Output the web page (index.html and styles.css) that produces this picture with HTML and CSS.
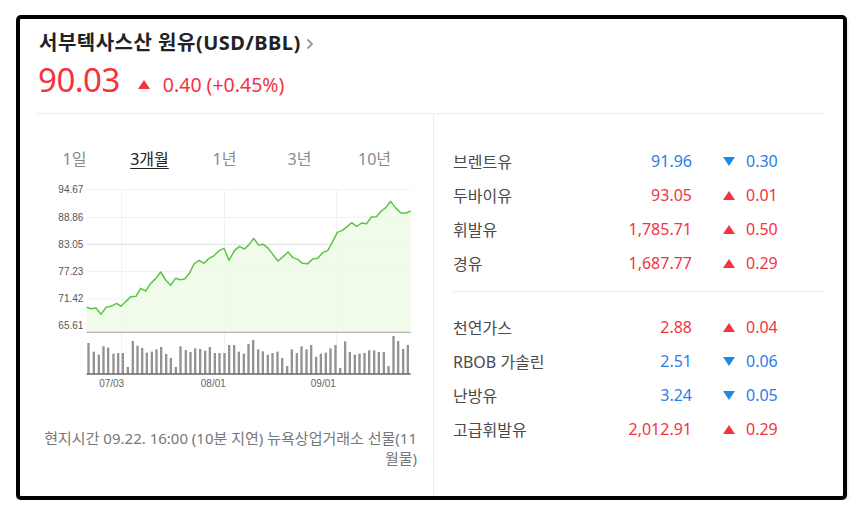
FILE: index.html
```html
<!DOCTYPE html>
<html lang="ko">
<head>
<meta charset="utf-8">
<title>서부텍사스산 원유</title>
<link rel="stylesheet" href="styles.css">
</head>
<body>
<div class="card">
  <div class="head">
    <h1 class="title">서부텍사스산 원유(USD/BBL)<svg class="chev" width="8" height="12" viewBox="0 0 8 12"><path d="M1.5 1.5 L6 6 L1.5 10.5" fill="none" stroke="#9a9a9a" stroke-width="1.8"/></svg></h1>
    <div class="price"><span class="now">90.03</span><span class="tri up"></span><span class="diff">0.40 (+0.45%)</span></div>
  </div>
  <div class="body">
    <div class="left">
      <ul class="tabs">
        <li>1일</li>
        <li class="on">3개월</li>
        <li>1년</li>
        <li>3년</li>
        <li>10년</li>
      </ul>
      <svg class="chart" width="390" height="210" viewBox="0 0 1170 630">
        <g stroke="#f0f0f0" stroke-width="3">
          <line x1="245" y1="28" x2="245" y2="582"/>
          <line x1="553" y1="28" x2="553" y2="582"/>
          <line x1="890" y1="28" x2="890" y2="582"/>
          <line x1="140" y1="28" x2="1112" y2="28"/>
          <line x1="140" y1="112" x2="1112" y2="112"/>
          <line x1="140" y1="274" x2="1112" y2="274"/>
          <line x1="140" y1="357" x2="1112" y2="357"/>
          <line x1="140" y1="438" x2="1112" y2="438"/>
        </g>
        <line x1="140" y1="193" x2="1112" y2="193" stroke="#dde1e6" stroke-width="3"/>
        <path d="M140,382 L152,386 L168,384 L183,403 L198,382 L213,379 L230,370 L243,379 L258,364 L273,350 L288,349 L302,325 L317,333 L332,310 L347,296 L362,276 L377,300 L392,316 L406,295 L421,299 L434,297 L448,280 L462,252 L477,241 L492,250 L507,235 L521,228 L537,212 L552,205 L567,241 L583,212 L598,199 L613,207 L628,193 L641,175 L656,195 L670,193 L685,205 L699,224 L714,243 L729,230 L744,216 L759,233 L773,238 L788,250 L803,251 L818,237 L833,235 L848,218 L863,212 L878,185 L892,157 L907,151 L922,139 L935,128 L950,139 L965,129 L980,131 L994,111 L1009,110 L1024,93 L1037,83 L1052,64 L1068,85 L1083,99 L1098,99 L1112,93 L1112,457 L140,457 Z" fill="#eefbe8" fill-opacity="0.9"/>
        <path d="M140,382 L152,386 L168,384 L183,403 L198,382 L213,379 L230,370 L243,379 L258,364 L273,350 L288,349 L302,325 L317,333 L332,310 L347,296 L362,276 L377,300 L392,316 L406,295 L421,299 L434,297 L448,280 L462,252 L477,241 L492,250 L507,235 L521,228 L537,212 L552,205 L567,241 L583,212 L598,199 L613,207 L628,193 L641,175 L656,195 L670,193 L685,205 L699,224 L714,243 L729,230 L744,216 L759,233 L773,238 L788,250 L803,251 L818,237 L833,235 L848,218 L863,212 L878,185 L892,157 L907,151 L922,139 L935,128 L950,139 L965,129 L980,131 L994,111 L1009,110 L1024,93 L1037,83 L1052,64 L1068,85 L1083,99 L1098,99 L1112,93" fill="none" stroke="#5cc447" stroke-width="4.5" stroke-linejoin="round"/>
        <line x1="140" y1="457" x2="1112" y2="457" stroke="#b5b5b5" stroke-width="4"/>
        <g fill="#939393">
          <rect x="142" y="489" width="7" height="93"/>
          <rect x="158" y="515" width="7" height="67"/>
          <rect x="173" y="524" width="7" height="58"/>
          <rect x="187" y="499" width="7" height="83"/>
          <rect x="201" y="503" width="7" height="79"/>
          <rect x="217" y="521" width="7" height="61"/>
          <rect x="231" y="519" width="7" height="63"/>
          <rect x="245" y="519" width="7" height="63"/>
          <rect x="260" y="561" width="7" height="21"/>
          <rect x="275" y="483" width="7" height="99"/>
          <rect x="289" y="497" width="7" height="85"/>
          <rect x="303" y="504" width="7" height="78"/>
          <rect x="317" y="518" width="7" height="64"/>
          <rect x="332" y="515" width="7" height="67"/>
          <rect x="346" y="508" width="7" height="74"/>
          <rect x="360" y="501" width="7" height="81"/>
          <rect x="375" y="522" width="7" height="60"/>
          <rect x="389" y="534" width="7" height="48"/>
          <rect x="404" y="561" width="7" height="21"/>
          <rect x="418" y="499" width="7" height="83"/>
          <rect x="434" y="510" width="7" height="72"/>
          <rect x="448" y="516" width="7" height="66"/>
          <rect x="462" y="505" width="7" height="77"/>
          <rect x="477" y="507" width="7" height="75"/>
          <rect x="492" y="512" width="7" height="70"/>
          <rect x="506" y="501" width="7" height="81"/>
          <rect x="521" y="519" width="7" height="63"/>
          <rect x="535" y="519" width="7" height="63"/>
          <rect x="550" y="519" width="7" height="63"/>
          <rect x="564" y="495" width="7" height="87"/>
          <rect x="579" y="495" width="7" height="87"/>
          <rect x="593" y="515" width="7" height="67"/>
          <rect x="608" y="521" width="7" height="61"/>
          <rect x="622" y="492" width="7" height="90"/>
          <rect x="636" y="480" width="7" height="102"/>
          <rect x="651" y="508" width="7" height="74"/>
          <rect x="665" y="514" width="7" height="68"/>
          <rect x="680" y="524" width="7" height="58"/>
          <rect x="694" y="519" width="7" height="63"/>
          <rect x="709" y="515" width="7" height="67"/>
          <rect x="723" y="534" width="7" height="48"/>
          <rect x="738" y="558" width="7" height="24"/>
          <rect x="752" y="508" width="7" height="74"/>
          <rect x="767" y="519" width="7" height="63"/>
          <rect x="781" y="499" width="7" height="83"/>
          <rect x="796" y="508" width="7" height="74"/>
          <rect x="810" y="495" width="7" height="87"/>
          <rect x="825" y="530" width="7" height="52"/>
          <rect x="839" y="521" width="7" height="61"/>
          <rect x="854" y="518" width="7" height="64"/>
          <rect x="868" y="505" width="7" height="77"/>
          <rect x="883" y="495" width="7" height="87"/>
          <rect x="897" y="564" width="7" height="18"/>
          <rect x="912" y="484" width="7" height="98"/>
          <rect x="926" y="516" width="7" height="66"/>
          <rect x="941" y="524" width="7" height="58"/>
          <rect x="955" y="521" width="7" height="61"/>
          <rect x="970" y="519" width="7" height="63"/>
          <rect x="984" y="511" width="7" height="71"/>
          <rect x="999" y="511" width="7" height="71"/>
          <rect x="1013" y="516" width="7" height="66"/>
          <rect x="1028" y="516" width="7" height="66"/>
          <rect x="1042" y="558" width="7" height="24"/>
          <rect x="1057" y="468" width="7" height="114"/>
          <rect x="1071" y="483" width="7" height="99"/>
          <rect x="1086" y="507" width="7" height="75"/>
          <rect x="1100" y="495" width="7" height="87"/>
        </g>
        <line x1="140" y1="582" x2="1112" y2="582" stroke="#666" stroke-width="4"/>
        <g class="ylab" font-size="30" fill="#555">
          <text x="55" y="38">94.67</text>
          <text x="55" y="122">88.86</text>
          <text x="55" y="203">83.05</text>
          <text x="55" y="284">77.23</text>
          <text x="55" y="367">71.42</text>
          <text x="55" y="448">65.61</text>
        </g>
        <g class="xlab" font-size="30" fill="#666" text-anchor="middle">
          <text x="215" y="622">07/03</text>
          <text x="520" y="622">08/01</text>
          <text x="850" y="622">09/01</text>
        </g>
      </svg>
      <p class="note">현지시간 09.22. 16:00 (10분 지연) 뉴욕상업거래소 선물(11월물)</p>
    </div>
    <div class="right">
      <ul class="list">
        <li><span class="name">브렌트유</span><span class="val down">91.96</span><span class="chg down"><span class="tri dn"></span>0.30</span></li>
        <li><span class="name">두바이유</span><span class="val up">93.05</span><span class="chg up"><span class="tri up"></span>0.01</span></li>
        <li><span class="name">휘발유</span><span class="val up">1,785.71</span><span class="chg up"><span class="tri up"></span>0.50</span></li>
        <li><span class="name">경유</span><span class="val up">1,687.77</span><span class="chg up"><span class="tri up"></span>0.29</span></li>
      </ul>
      <ul class="list second">
        <li><span class="name">천연가스</span><span class="val up">2.88</span><span class="chg up"><span class="tri up"></span>0.04</span></li>
        <li><span class="name">RBOB 가솔린</span><span class="val down">2.51</span><span class="chg down"><span class="tri dn"></span>0.06</span></li>
        <li><span class="name">난방유</span><span class="val down">3.24</span><span class="chg down"><span class="tri dn"></span>0.05</span></li>
        <li><span class="name">고급휘발유</span><span class="val up">2,012.91</span><span class="chg up"><span class="tri up"></span>0.29</span></li>
      </ul>
    </div>
  </div>
</div>
</body>
</html>
```

FILE: styles.css
```css
* { box-sizing: border-box; }

html, body {
  background: #ffffff;
}

body {
  margin: 15px 0 0 16px;
  font-family: "Noto Sans", "Noto Sans CJK KR", sans-serif;
  color: #222;
}

.card {
  width: 831px;
  height: 485px;
  border: 4px solid #000;
  border-radius: 5px;
  background: #fff;
  box-shadow: 0 3px 4px rgba(0, 0, 0, 0.18);
  padding: 0 18px 0 17px;
  display: flex;
  flex-direction: column;
}

.head {
  height: 95px;
  padding: 11px 0 0 2px;
  border-bottom: 1px solid #ebebeb;
}

.title {
  margin: 0;
  font-size: 20px;
  line-height: 26px;
  letter-spacing: 0.5px;
  font-weight: 700;
  color: #222;
  display: flex;
  align-items: center;
}

.chev {
  margin-left: 5px;
  margin-top: 1px;
}

.price {
  margin-top: 4px;
  display: flex;
  align-items: baseline;
  color: #f5333f;
}

.price .now {
  font-size: 33px;
  line-height: 40px;
  letter-spacing: -0.5px;
  margin-left: -1px;
}

.price .tri {
  margin: 0 13px 0 18px;
  position: relative;
  top: -3px;
}

.price .diff {
  font-size: 19.5px;
  line-height: 24px;
}

.tri {
  display: inline-block;
  width: 0;
  height: 0;
  border-left: 6px solid transparent;
  border-right: 6px solid transparent;
}

.tri.up {
  border-bottom: 9px solid #f5333f;
}

.tri.dn {
  border-top: 9px solid #1e8ae8;
}

.body {
  flex: 1;
  display: grid;
  grid-template-columns: 397px 1fr;
}

.left {
  border-right: 1px solid #ebebeb;
}

.tabs {
  list-style: none;
  margin: 0;
  padding: 33px 0 0 0;
  display: flex;
}

.tabs li {
  width: 75px;
  text-align: center;
  font-size: 16px;
  line-height: 24px;
  color: #8a8a8a;
}

.tabs li.on {
  color: #222;
  text-decoration: underline;
  text-underline-offset: 3px;
}

.chart {
  display: block;
  margin: 9px 0 0 3px;
}

.chart text {
  font-family: "Liberation Sans", Arial, sans-serif;
}

.note {
  margin: 38px 0 0 0;
  padding: 0 16px 0 0;
  text-align: right;
  font-size: 15px;
  line-height: 20px;
  letter-spacing: 0;
  color: #777;
}

.right {
  padding: 30px 0 0 19px;
}

.list {
  list-style: none;
  margin: 0;
  padding: 0;
}

.list.second {
  margin-top: 11px;
  padding-top: 18px;
  border-top: 1px solid #ebebeb;
}

.list li {
  display: flex;
  align-items: center;
  height: 34px;
  font-size: 16px;
}

.name {
  width: 151px;
  color: #4a4a4a;
}

.val {
  width: 88px;
  text-align: right;
}

.chg {
  margin-left: 31px;
  display: flex;
  align-items: center;
}

.chg .tri {
  margin-right: 11px;
}

.up { color: #f5333f; }
.down { color: #2b7de9; }
```
